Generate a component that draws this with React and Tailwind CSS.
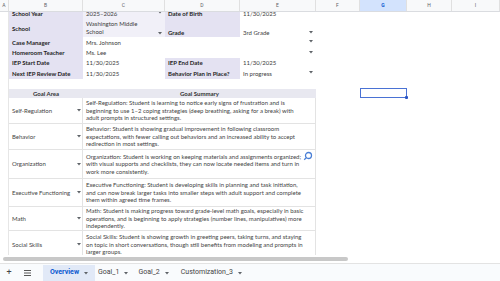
import React from "react";

const COLS = [
  "w-[9px]",
  "w-[74px]",
  "w-[82px]",
  "w-[75px]",
  "w-[76px]",
  "w-[44px]",
  "w-[47px]",
  "w-[45px]",
  "w-[48px]",
];
const LETTERS = ["A", "B", "C", "D", "E", "F", "G", "H", "I"];

function Arrow({ className = "" }) {
  return (
    <svg width="4" height="3" viewBox="0 0 4 3" className={className}>
      <path d="M0 0 L4 0 L2 2.6 Z" fill="#5f6368" />
    </svg>
  );
}

function Label({ w, children, align = "items-center" }) {
  return (
    <div
      className={`${w} shrink-0 flex ${align} px-[3px] bg-[#e4e2f2] font-bold text-[#1f1f1f] whitespace-nowrap overflow-hidden`}
    >
      {children}
    </div>
  );
}

function Value({ w, children, arrow, align = "items-center", tint = false }) {
  return (
    <div
      className={`${w} shrink-0 flex ${align} justify-between px-[3px] whitespace-nowrap overflow-hidden text-[#3c3c3c] ${tint ? "bg-[#f1f0f8]" : "bg-white"}`}
    >
      <div>{children}</div>
      {arrow && <Arrow className="mb-[2px] shrink-0" />}
    </div>
  );
}

function Blank({ w, line = false }) {
  return (
    <div
      className={`${w} shrink-0 ${line ? "border-r border-[#e6e6e6]" : ""}`}
    />
  );
}

function Rest() {
  return (
    <>
      <Blank w={COLS[5]} />
      <Blank w={COLS[6]} />
      <Blank w={COLS[7]} />
      <Blank w={COLS[8]} />
    </>
  );
}

const GOALS = [
  {
    h: "h-[26px]",
    area: "Self-Regulation",
    lines: [
      "Self-Regulation: Student is learning to notice early signs of frustration and is",
      "beginning to use 1–2 coping strategies (deep breathing, asking for a break) with",
      "adult prompts in structured settings.",
    ],
  },
  {
    h: "h-[26px]",
    area: "Behavior",
    lines: [
      "Behavior: Student is showing gradual improvement in following classroom",
      "expectations, with fewer calling out behaviors and an increased ability to accept",
      "redirection in most settings.",
    ],
  },
  {
    h: "h-[29px]",
    area: "Organization",
    lines: [
      "Organization: Student is working on keeping materials and assignments organized;",
      "with visual supports and checklists, they can now locate needed items and turn in",
      "work more consistently.",
    ],
  },
  {
    h: "h-[28px]",
    area: "Executive Functioning",
    lines: [
      "Executive Functioning: Student is developing skills in planning and task initiation,",
      "and can now break larger tasks into smaller steps with adult support and complete",
      "them within agreed time frames.",
    ],
  },
  {
    h: "h-[24px]",
    area: "Math",
    lines: [
      "Math: Student is making progress toward grade-level math goals, especially in basic",
      "operations, and is beginning to apply strategies (number lines, manipulatives) more",
      "independently.",
    ],
  },
  {
    h: "h-[28px]",
    area: "Social Skills",
    lines: [
      "Social Skills: Student is showing growth in greeting peers, taking turns, and staying",
      "on topic in short conversations, though still benefits from modeling and prompts in",
      "larger groups.",
    ],
  },
];

export default function App() {
  return (
    <div className="w-[500px] h-[281px] overflow-hidden bg-white flex flex-col font-['Lato','Liberation_Sans',sans-serif] text-[6px] leading-[7.5px]">
      {/* column letters */}
      <div className="flex h-[12px] shrink-0 bg-[#f8f9fa] border-b border-[#dadce0] text-[5px] text-[#5f6368] font-['Roboto',sans-serif] relative z-10">
        {LETTERS.map((l, i) => (
          <div
            key={l}
            className={`${COLS[i]} shrink-0 flex items-center justify-center border-r border-[#e0e0e0] ${l === "G" ? "bg-[#d3e3fd] text-[#0b57d0] font-bold" : ""}`}
          >
            {l}
          </div>
        ))}
      </div>

      {/* sheet body */}
      <div className="h-[243px] shrink-0 overflow-hidden relative">
        {/* School Year (scrolled, partly hidden) */}
        <div className="flex h-[13px] -mt-[5px]">
          <Blank w={COLS[0]} line />
          <Label w={COLS[1]}>School Year</Label>
          <Value w={COLS[2]} arrow tint>
            2025–2026
          </Value>
          <Label w={COLS[3]}>Date of Birth</Label>
          <Value w={COLS[4]}>11/30/2025</Value>
          <Rest />
        </div>
        {/* School */}
        <div className="flex h-[17px]">
          <Blank w={COLS[0]} line />
          <Label w={COLS[1]}>School</Label>
          <Value w={COLS[2]} arrow align="items-end" tint>
            <div className="leading-[8px] pb-[1px]">
              Washington Middle
              <br />
              School
            </div>
          </Value>
          <Label w={COLS[3]} align="items-end pb-[1px]">
            Grade
          </Label>
          <Value w={COLS[4]} arrow align="items-end pb-[1px]">
            3rd Grade
          </Value>
          <Rest />
        </div>
        {/* Case Manager */}
        <div className="flex h-[11px]">
          <Blank w={COLS[0]} line />
          <Label w={COLS[1]}>Case Manager</Label>
          <Value w={COLS[2]}>Mrs. Johnson</Value>
          <Blank w={COLS[3]} />
          <Value w={COLS[4]} arrow>
            {""}
          </Value>
          <Rest />
        </div>
        {/* Homeroom Teacher */}
        <div className="flex h-[10px]">
          <Blank w={COLS[0]} line />
          <Label w={COLS[1]}>Homeroom Teacher</Label>
          <Value w={COLS[2]}>Ms. Lee</Value>
          <Blank w={COLS[3]} />
          <Value w={COLS[4]} arrow>
            {""}
          </Value>
          <Rest />
        </div>
        {/* IEP Start Date */}
        <div className="flex h-[10px]">
          <Blank w={COLS[0]} line />
          <Label w={COLS[1]}>IEP Start Date</Label>
          <Value w={COLS[2]}>11/30/2025</Value>
          <Label w={COLS[3]}>IEP End Date</Label>
          <Value w={COLS[4]}>11/30/2025</Value>
          <Rest />
        </div>
        {/* Next IEP Review Date */}
        <div className="flex h-[11px]">
          <Blank w={COLS[0]} line />
          <Label w={COLS[1]}>Next IEP Review Date</Label>
          <Value w={COLS[2]}>11/30/2025</Value>
          <Label w={COLS[3]}>Behavior Plan in Place?</Label>
          <Value w={COLS[4]} arrow>
            In progress
          </Value>
          <Rest />
        </div>
        {/* empty row */}
        <div className="flex h-[10px]">
          <Blank w={COLS[0]} line />
        </div>

        {/* goal header */}
        <div className="flex h-[9px]">
          <Blank w={COLS[0]} line />
          <div className={`${COLS[1]} shrink-0 flex items-center justify-center bg-[#e8e8f0] font-bold text-[#333]`}>
            Goal Area
          </div>
          <div className="w-[233px] shrink-0 flex items-center justify-center bg-[#e8e8f0] font-bold text-[#333]">
            Goal Summary
          </div>
          <Blank w={COLS[5]} />
          <div className={`${COLS[6]} shrink-0 border border-[#4a72d4] relative -mt-[1px] h-[10px]`}>
            <div className="absolute -right-[2px] -bottom-[2px] w-[3px] h-[3px] bg-[#2b55c5] rounded-[1px]" />
          </div>
        </div>

        {/* goal rows */}
        {GOALS.map((g) => (
          <div key={g.area} className={`flex ${g.h}`}>
            <Blank w={COLS[0]} line />
            <div
              className={`${COLS[1]} shrink-0 flex items-center justify-between pl-[3px] pr-[1px] border-b border-r border-[#e3e3e3] text-[#444] whitespace-nowrap`}
            >
              <span>{g.area}</span>
              <Arrow />
            </div>
            <div className="w-[233px] shrink-0 flex flex-col justify-center px-[3px] border-b border-r border-[#e3e3e3] text-[#444] whitespace-nowrap overflow-hidden">
              {g.lines.map((l) => (
                <div key={l}>{l}</div>
              ))}
            </div>
          </div>
        ))}

        {/* pointer */}
        <svg
          width="10"
          height="10"
          viewBox="0 0 10 10"
          className="absolute left-[303px] top-[139px]"
        >
          <circle cx="5.5" cy="4.5" r="3" fill="none" stroke="#4a7fd6" strokeWidth="1.3" />
          <path d="M3.4 6.6 L1.2 8.8" stroke="#4a7fd6" strokeWidth="1.3" />
        </svg>
      </div>

      {/* horizontal scrollbar */}
      <div className="h-[8px] shrink-0 flex items-center bg-white">
        <div className="ml-[3px] w-[345px] h-[4px] rounded-full bg-[#c8c8c8]" />
      </div>

      {/* sheet tabs */}
      <div className="flex-1 flex items-end bg-[#f9fbfd] border-t border-[#e3e3e3] font-['Roboto',sans-serif] text-[7px] text-[#444]">
        <div className="h-[16px] w-[18px] flex items-center justify-center text-[9px] text-[#444]">
          +
        </div>
        <div className="h-[16px] w-[18px] flex items-center justify-center">
          <svg width="7" height="6" viewBox="0 0 7 6">
            <path d="M0 0.5 H7 M0 3 H7 M0 5.5 H7" stroke="#444" strokeWidth="0.9" />
          </svg>
        </div>
        <div className="ml-[7px] h-[16px] w-[52px] flex items-center justify-center gap-[5px] bg-[#e1e9f7] font-bold text-[#0b57d0]">
          Overview
          <Arrow />
        </div>
        <div className="h-[16px] flex items-center gap-[5px] pl-[3px] pr-[7px]">
          Goal_1
          <Arrow />
        </div>
        <div className="h-[16px] flex items-center gap-[5px] pl-[3px] pr-[12px]">
          Goal_2
          <Arrow />
        </div>
        <div className="h-[16px] flex items-center gap-[5px]">
          Customization_3
          <Arrow />
        </div>
      </div>
    </div>
  );
}
